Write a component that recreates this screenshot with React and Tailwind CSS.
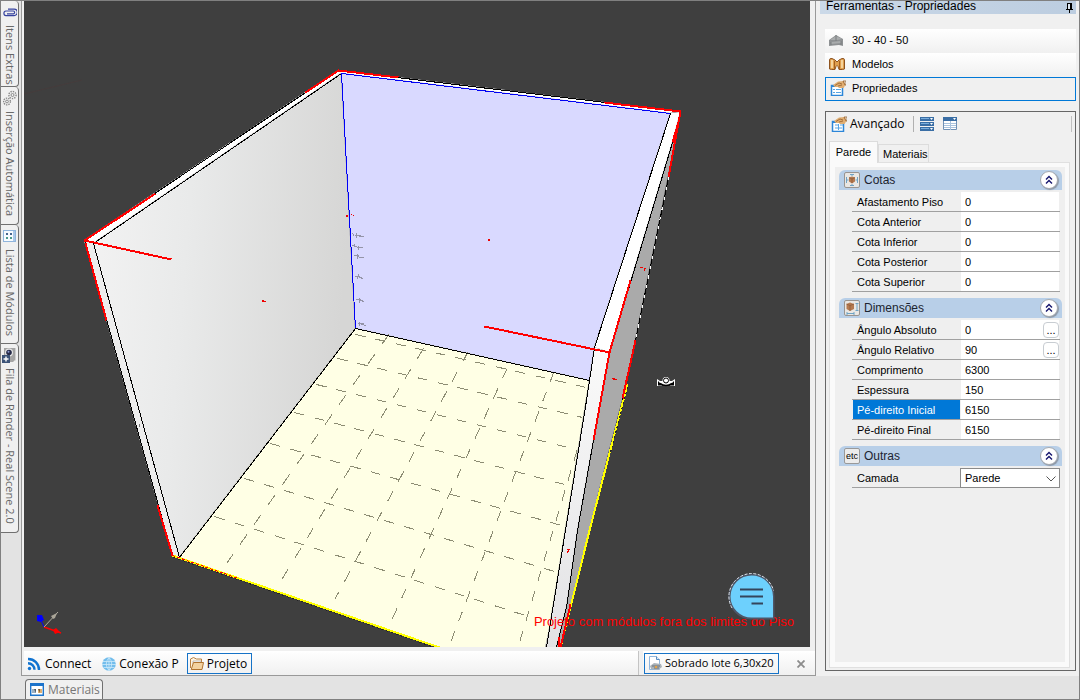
import React, { useState } from "react";

const SANS = "font-['Liberation_Sans',Arial,sans-serif]";
const UI = "font-['Open_Sans','Noto_Sans',sans-serif]";

/* ---------- icons ---------- */

const ClipIcon = () => (
  <svg width="14" height="9" viewBox="0 0 14 9" fill="none" stroke="#36439f" strokeWidth="1.2">
    <path d="M5 1.2h6.2a2.9 3 0 0 1 0 6.4H3a2 2.2 0 0 1 0-4.6h7.4a1.2 1.4 0 0 1 0 2.8H4" />
  </svg>
);

const GearsIcon = () => (
  <svg width="14" height="16" viewBox="0 0 14 16" fill="none" stroke="#8a8a8a">
    <circle cx="9.500" cy="5" r="3.600" strokeDasharray="1.4 1" strokeWidth="1.400" />
    <circle cx="9.500" cy="5" r="1.500" />
    <circle cx="4" cy="11.500" r="3.400" strokeDasharray="1.4 1" strokeWidth="1.400" />
    <circle cx="4" cy="11.500" r="1.400" />
  </svg>
);

const ModulesIcon = () => (
  <svg width="13" height="12" viewBox="0 0 13 12">
    <rect x=".5" y=".5" width="12" height="11" fill="#f7fbff" stroke="#8fb4dc" />
    <path d="M11 1v10" stroke="#a9c8ea" strokeWidth="2" />
    <path d="M3 3h2v2H3zM7 3h2v2H7z" fill="#46658f" />
    <path d="M3 7h2v2H3zM7 7h2v2H7z" fill="#4a9a8c" />
  </svg>
);

const RenderIcon = () => (
  <svg width="15" height="16" viewBox="0 0 15 16">
    <path d="M2 1h12v11l-3 3H5V9H2z" fill="#a4a4a4" />
    <path d="M13 1h1v12l-1 1z" fill="#d0d0d0" />
    <circle cx="7" cy="5.500" r="4" fill="#e6e6e6" />
    <circle cx="7" cy="5.500" r="2.800" fill="#252a48" />
    <circle cx="6.500" cy="4.800" r="1" fill="#8d9bd0" />
    <path d="M0 8h8v8H0z" fill="#3d5478" />
    <path d="M4 9.500v5M1.500 12h5" stroke="#fff" strokeWidth="1.400" />
  </svg>
);

const WallIcon = () => (
  <svg width="15" height="13" viewBox="0 0 15 13">
    <path d="M0 6 7 1l7 4v7l-4-1-5 .5L0 12z" fill="#8e9193" />
    <path d="M1 6 7 2l6 3-5 1zM2 8l10-1v2L2 10z" fill="#a9acad" />
    <path d="M7 1v6M2 8v3M12 7v4" stroke="#7b7e80" />
  </svg>
);

const BindersIcon = () => (
  <svg width="16" height="14" viewBox="0 0 16 14">
    <path d="M.5 3Q.5 1 3 1.500L6 3l2 2 2-2 3-1.500q2.500-.5 2.500 1.500v9l-2 .5H10l-1-3-1-1-1 1-1 3H2.500L.5 12z" fill="#e0a050" stroke="#8f5420" />
    <path d="M5.500 4v8M10.500 4v8" stroke="#a7611e" />
    <path d="M3 3v8M13 3v8" stroke="#fbe3b4" strokeWidth="1.500" />
  </svg>
);

const PropsIcon = ({ grid }) => (
  <svg className="shrink-0" width="16" height="16" viewBox="0 0 16 16">
    <path d="M1.500 5.500h11v10h-11z" fill="#fff" stroke="#2c86d8" strokeWidth="1.500" />
    <path d="M1 5h6v2H1z" fill="#2c86d8" />
    {grid ? (
      <path d="M4 9h3M9 9h3M4 12h7M7.500 8v6" stroke="#57a5e5" />
    ) : (
      <path d="M3 9.500h2M6 9.500h5M3 12.500h2M6 12.500h5" stroke="#57a5e5" />
    )}
    <path d="M3 5 8 1.500 14 1l1.500 4-2 3H9L8 7 5 7z" fill="#e0ae72" />
    <path d="M5 5.500 9 3l3 1M8 6l4-1M13 1h3v4h-1z" stroke="#94602d" fill="none" strokeWidth=".8" />
  </svg>
);

const RowsIcon = () => (
  <svg width="15" height="14" viewBox="0 0 15 14">
    {[0, 5, 10].map((y) => (
      <g key={y}>
        <path d={`M0 ${y}h14v4H0z`} fill="#3a6ea5" />
        <path d={`M1 ${y + 1}h8v1H1z`} fill="#7aaedd" />
        <path d={`M10 ${y + 1}h3l-1.500 2z`} fill="#fff" />
      </g>
    ))}
  </svg>
);

const TableIcon = () => (
  <svg width="15" height="14" viewBox="0 0 15 14">
    <path d="M.5.500h13v12H.5z" fill="#fff" stroke="#6f90b5" />
    <path d="M0 0h14v4H0z" fill="#3a6ea5" />
    <path d="M10 1h3l-1.500 2z" fill="#fff" />
    <path d="M1 6.500h12M1 8.500h12M1 10.500h12M7.500 4v9" stroke="#a9c3de" />
  </svg>
);

const PinIcon = () => (
  <svg width="8" height="10" viewBox="0 0 8 10" shapeRendering="crispEdges">
    <path d="M1 0h5v6H1z" fill="#000" />
    <path d="M2 1h2v5H2z" fill="#dfe8f2" />
    <path d="M0 6h7v1H0zM3 7h1v3H3z" fill="#000" />
  </svg>
);

const FeedIcon = () => (
  <svg className="shrink-0" width="14" height="14" viewBox="0 0 14 14" fill="none" stroke="#1173d0" strokeWidth="2.400">
    <circle cx="2.500" cy="11.500" r="1.700" fill="#1173d0" stroke="none" />
    <path d="M1 6.200a6.500 6.500 0 0 1 6.500 6.500M1 2a10.700 10.700 0 0 1 11 11" />
  </svg>
);

const GlobeIcon = () => (
  <svg className="shrink-0" width="14" height="14" viewBox="0 0 14 14">
    <circle cx="7" cy="7" r="6.800" fill="#72bdec" />
    <path d="M1 4.500h12M0 7.500h14M1.500 10.500h11M7 0v14M7 .5Q1.500 7 7 13.500M7 .5Q12.500 7 7 13.500" stroke="#cdeafa" fill="none" strokeWidth=".8" />
  </svg>
);

const FolderIcon = () => (
  <svg className="shrink-0" width="14" height="13" viewBox="0 0 14 13">
    <path d="M.5 11V2l3-1.500 3 1.500h5v3" fill="#fff3df" stroke="#b98243" />
    <path d="M3 4h8v3H3z" fill="#fff" stroke="#999" strokeWidth=".6" />
    <path d="M3.500 5.500h10l-1.500 7H1.200z" fill="#f3d2a0" stroke="#b0732f" />
  </svg>
);

const DocIcon = () => (
  <svg className="shrink-0" width="14" height="15" viewBox="0 0 14 15">
    <path d="M1.500.5h7l3 3v10h-10z" fill="#fff" stroke="#8fb6dd" />
    <path d="M8.500.5v3h3" fill="#dbe9f7" stroke="#5b8ec2" />
    <path d="M2 10 6 7l7 1 1 3-4 3-7-1z" fill="#aab2b8" />
    <path d="M4 10h8M6 12h5" stroke="#69727a" />
    <circle cx="8" cy="11" r="1.300" fill="#dfa14b" />
  </svg>
);

const MaterialsIcon = () => (
  <svg className="shrink-0" width="14" height="13" viewBox="0 0 14 13">
    <path d="M.7.700h12.600v11.600H.7z" fill="#fff" stroke="#1c73cb" strokeWidth="1.400" />
    <path d="M0 0h14v3H0z" fill="#1c73cb" />
    <path d="M2 6h4v4H2z" fill="#9db0c2" />
    <path d="M4 6h2v4z" fill="#4f5963" />
    <path d="M8 6h4v4H8z" fill="#e0b071" />
    <path d="M8 6h2v4z" fill="#7d5a33" />
  </svg>
);

const GroupIcon = ({ kind }) => {
  if (kind === "etc")
    return (
      <span className={`${SANS} flex h-4 w-4 items-center justify-center rounded-xs border border-[#999] bg-[#ececec] text-[9px] leading-none text-black`}>
        etc
      </span>
    );
  return (
    <svg width="16" height="16" viewBox="0 0 16 16">
      <rect x=".5" y=".5" width="15" height="15" rx="1.500" fill="#e9e7e4" stroke="#999490" />
      {kind === "cotas" ? (
        <>
          <path d="M5 5.500 8 4.500l3 1v4l-3 2-3-2z" fill="#b57a50" />
          <path d="M5 5.500 8 7l3-1.500M8 7v4" stroke="#8a5735" fill="none" strokeWidth=".7" />
          <path d="M2.500 5v6M13.500 5v6M2.500 8h2M11.500 8h2M6 2.500h4M6 13.500h4M8 2.500v1.500M8 12v1.500" stroke="#6fa3c4" fill="none" />
        </>
      ) : (
        <>
          <path d="M2.500 4 6 2.500 10 4v5l-4 2-3.500-2z" fill="#b57a50" />
          <path d="M2.500 4 6 5.500 10 4M6 5.500V11" stroke="#8a5735" fill="none" strokeWidth=".7" />
          <path d="M11.500 3.500h3M13 3.500v7M11.500 10.500h3M3 13.500h7M3 12v3M10 12v3" stroke="#6fa3c4" fill="none" />
        </>
      )}
    </svg>
  );
};

/* ---------- 3D scene ---------- */

const COLUMNS = [
  [388.3, 334, 226, 563],
  [423, 348, 280.6, 580],
  [467.7, 351, 334.3, 599],
  [506.6, 368, 391, 620],
  [553.6, 371, 450.8, 640],
  [576.5, 450, 519, 642],
];
const ROWS = [
  [355, 334, 586, 387],
  [337, 358, 582, 417],
  [316, 384, 567, 447],
  [294, 412, 564, 484],
  [270, 443, 561, 525],
  [244, 478, 554, 571],
  [214, 516, 528, 616],
];

function GridLine({ line }) {
  const [x1, y1, x2, y2] = line;
  const k = Math.hypot(x2 - x1, y2 - y1) / Math.max(Math.abs(x2 - x1), Math.abs(y2 - y1));
  return <line x1={x1} y1={y1} x2={x2} y2={y2} strokeDasharray={`${10 * k} ${10 * k}`} />;
}

function Scene() {
  return (
    <svg className="block h-full w-full" viewBox="24 1 786 646" preserveAspectRatio="xMinYMin slice" fill="none" role="img" aria-label="Vista 3D">
      <defs>
        <linearGradient id="leftWall" x1="0" y1="0" x2="1" y2="0.15">
          <stop offset="0" stopColor="#f3f3f3" />
          <stop offset="0.4" stopColor="#e9eaea" />
          <stop offset="1" stopColor="#d6d6d5" />
        </linearGradient>
        <linearGradient id="column" x1="0" y1="0" x2="0" y2="1">
          <stop offset="0" stopColor="#fafafa" />
          <stop offset="1" stopColor="#e2e2e4" />
        </linearGradient>
      </defs>
      <rect x="24" y="1" width="786" height="646" fill="#3f3f3f" />
      <path d="M24 94 82 80" stroke="#463c3c" />
      <polygon points="84,240 338,70 680,111 670,113 341,73 93,243 179,557 172,555" fill="#fff" />
      <polygon points="84,240 93,243 179,557 172,555" fill="#ededed" />
      <polygon points="341,73 355,328 179,557 93,243" fill="url(#leftWall)" />
      <polygon points="341,73 670,113 594,347 589,380 355,328" fill="#d9d9ff" />
      <polygon points="355,328 589,380 546,647 439,647 179,557" fill="#ffffe5" />
      <polygon points="680,112 667.700,177 635,340 622,400 609,450 589,530 560,647 545,647 609,352" fill="#aaa" />
      <polygon points="670,113 680,112 672,142 609,352 594,347" fill="#fff" />
      <polygon points="594,347 609,352 593,440 577,530 566,607 556,647 546,647 586,400" fill="url(#column)" />

      <g shapeRendering="crispEdges" transform="translate(0.5 0.5)">
        <g stroke="#8c8c73">
          {COLUMNS.map((l) => <GridLine key={l.join()} line={l} />)}
        </g>
        <g stroke="#8c8c73">
          {ROWS.map((l) => <GridLine key={l.join()} line={l} />)}
        </g>
        <g stroke="#000">
          <path d="M84 240 338 70 680 111" />
          <path d="M341 73 93 243 179 557 355 328 589 380" />
          <path d="M84 240 172 555" />
          <path d="M670 113 594 347 586 400 546 647" />
          <path d="M672 142 609 352 593 440 577 530 566 607 556 647" />
          <path d="M668 177 635 340 622 400" />
        </g>
        <path d="M668 177 635 340" stroke="#fff" strokeDasharray="3 7" />
        <path d="M670 113 341 73 355 328" stroke="#0000f5" />
        <path d="M172 555 439 647M627 384 610 449 589 530 560 647" stroke="#ff0" strokeWidth="2" />
        <path d="M173 557 440 649M627 387 610 452" stroke="#222" strokeDasharray="2 3" />
        <g stroke="#f00" strokeWidth="2">
          <path d="M84 240 171 259M484 326 609 352" />
          <path d="M84 240 155 193M305 92 338 70 398 77M604 102 680 111" />
          <path d="M85 243 106 320M157 505 172 555" />
          <path d="M680 111 668 177M679 118 672 142" />
          <path d="M630 280 609 352 593 440" />
          <path d="M635 340 622 398" />
          <path d="M558 636V647M570 604 560 647" />
        </g>
        <path d="M172 555 238 578" stroke="#f00" strokeDasharray="3 2" />
        <g stroke="#9494a8">
          <path d="M352 233l2 3M354 235h6M356 232v5M358 236h5" />
          <path d="M352 245l5 1M354 243v3M356 247h6M358 245v4" />
          <path d="M353 255h5l1 3M357 253v5M358 257h5" />
          <path d="M354 276h5M358 274l-1 5M359 277l4 1" />
          <path d="M355 299h5M359 297v5M360 300l4 1" />
          <path d="M357 323h6M359 321v4M361 324l5 1" />
        </g>
        <g fill="#e00" stroke="none">
          <path d="M345 214h2v2h-2zM350 213h1v1h-1zM352 214h1v1h-1zM487 238h2v2h-2z" />
          <path d="M261 299h2v1h2v1h-4zM639 266h3v1h-3zM643 267h2v1h-1v2h-1zM611 377h3v1h2v1h-4z" />
          <path d="M566 548h3v1h-1v2h-1v1h-1v-2h1z" />
          <path d="M138 423h1v3h-1z" fill="#777" />
        </g>
      </g>

      <path d="M44 627 61 633" stroke="#f00" strokeWidth="1.500" />
      <path d="M53 630 56 628 60 632 55 634z" fill="#f00" />
      <path d="M44 627 39 616" stroke="#00f" />
      <path d="M37 615h5l2 5-3 2-4-1z" fill="#00f" />
      <path d="M44 627 58 612" stroke="#b0aca0" />
      <path d="M51 616l6-3-2 5-2 1z" fill="#aaa598" />

      <path d="M657 379v7h5v-1h8v1h5v-7l-3 2h-12z" fill="#fff" />
      <circle cx="666" cy="380.500" r="3.500" fill="#fff" />
      <circle cx="666" cy="380.500" r="2.500" fill="#fff" stroke="#000" />
      <path d="M660 383.500q6 4 12 0" stroke="#000" strokeWidth="1.600" />
      <path d="M658 381v4.500h4.500zM674 381v4.500h-4.500z" fill="#000" />
    </svg>
  );
}

/* ---------- panels ---------- */

const SIDE_TABS = [
  { label: "Itens Extras", icon: <ClipIcon />, size: "h-[86px]" },
  { label: "Inserção Automática", icon: <GearsIcon />, size: "h-[138px]" },
  { label: "Lista de Módulos", icon: <ModulesIcon />, size: "h-[119px]" },
  { label: "Fila de Render - Real Scene 2.0", icon: <RenderIcon />, size: "h-[189px]" },
];

function SideTabs() {
  return (
    <nav className="flex w-5 shrink-0 flex-col items-start bg-[#e3e3e3]">
      {SIDE_TABS.map((t) => (
        <button key={t.label} className={`${t.size} ${UI} flex w-[18px] flex-col items-center gap-1.5 rounded-r border-r border-b border-[#707070] bg-[#f0f0f0] pt-1 text-[11px] text-[#666]`}>
          <span className="flex h-3.5 w-4 shrink-0 items-center justify-center">{t.icon}</span>
          <span className="whitespace-nowrap leading-4 [writing-mode:vertical-rl]">{t.label}</span>
        </button>
      ))}
    </nav>
  );
}

function PropertyRow({ id, name, value, more, selected }) {
  return (
    <div className="flex h-5 border-b border-[#a0a0a0] pr-px">
      <label htmlFor={id} className={`ml-px w-[107px] shrink-0 pl-1 leading-[21px] ${selected ? "h-[19px] bg-[#0078d7] text-white" : "h-[19px]"}`}>
        {name}
      </label>
      <div className="ml-px flex min-w-0 flex-1 items-center bg-white">
        <input id={id} defaultValue={value} className="h-[19px] min-w-0 flex-1 bg-transparent pl-1 outline-none" />
        {more && (
          <button aria-label={`Editar ${name}`} className="flex h-4 w-4 shrink-0 items-center justify-center rounded border border-[#c8cdd2] bg-white leading-3">
            ...
          </button>
        )}
      </div>
    </div>
  );
}

function Group({ title, kind, children }) {
  return (
    <section className="flex flex-col gap-0.5">
      <div className="flex h-5 items-center rounded-t-md bg-[#b8cfe8] pr-1 pl-[5px]">
        <GroupIcon kind={kind} />
        <h3 className="ml-1 flex-1 text-xs text-[#1c2430]">{title}</h3>
        <button aria-label={`Recolher ${title}`} className="flex h-[18px] w-[18px] items-center justify-center rounded-full border border-[#a4a9b0] bg-white shadow-[1px_1px_1px_#8c97a6]">
          <svg width="8" height="10" viewBox="0 0 8 10" fill="none" stroke="#15156e" strokeWidth="1.400">
            <path d="M1 4.500 4 1.500l3 3M1 8.500 4 5.500l3 3" />
          </svg>
        </button>
      </div>
      <div className="mr-0.5 ml-[13px]">{children}</div>
    </section>
  );
}

const COTAS = ["Afastamento Piso", "Cota Anterior", "Cota Inferior", "Cota Posterior", "Cota Superior"];
const DIMENSOES = [
  { name: "Ângulo Absoluto", value: "0", more: true },
  { name: "Ângulo Relativo", value: "90", more: true },
  { name: "Comprimento", value: "6300" },
  { name: "Espessura", value: "150" },
  { name: "Pé-direito Inicial", value: "6150", selected: true },
  { name: "Pé-direito Final", value: "6150" },
];

function ToolsPanel() {
  const [tab, setTab] = useState("Parede");
  return (
    <aside className={`${SANS} flex w-[263px] shrink-0 flex-col bg-[#f0f0f0] pr-[3px] pl-1 text-[11px] text-black`}>
      <header className="flex h-[13px] items-center justify-between bg-linear-to-r from-[#cbd9e8] to-[#bccde0] pr-0.5 pl-1.5 text-xs leading-[11px]">
        <h2 className="pb-0.5">Ferramentas - Propriedades</h2>
        <button aria-label="Fixar painel"><PinIcon /></button>
      </header>
      <div className="mt-[15px] flex flex-col pl-[5px]">
        <button className="flex h-6 items-center gap-2 bg-linear-to-b from-white to-[#f0f0f0] pb-0.5 pl-1 text-left">
          <WallIcon />30 - 40 - 50
        </button>
        <button className="flex h-6 items-center gap-[7px] bg-linear-to-b from-white to-[#f0f0f0] pb-0.5 pl-1 text-left">
          <BindersIcon />Modelos
        </button>
        <button className="flex h-6 items-center gap-1.5 border border-[#0078d7] pb-0.5 pl-1 text-left">
          <PropsIcon />Propriedades
        </button>
      </div>

      <div className="mt-2.5 mb-[5px] ml-[5px] flex flex-1 flex-col border border-[#666] pr-[5px] pb-0.5 pl-[3px]">
        <div className="flex h-[27px] items-center pb-[3px]">
          <button className={`${UI} ml-0.5 flex items-center gap-[3px] text-xs`}>
            <PropsIcon grid />Avançado
          </button>
          <span className="ml-2 h-4 w-px bg-[#b0b0b0]" />
          <button aria-label="Agrupar" className="ml-1.5"><RowsIcon /></button>
          <button aria-label="Tabela" className="ml-2"><TableIcon /></button>
          <span className="-mr-0.5 ml-auto h-4 w-px bg-[#c0c0c0]" />
        </div>
        <div role="tablist" className="mt-0.5 flex items-end">
          {["Parede", "Materiais"].map((t) => (
            <button
              key={t}
              role="tab"
              aria-selected={tab === t}
              onClick={() => setTab(t)}
              className={`border border-b-0 border-[#dcdcdc] px-1 ${tab === t ? "relative -mb-px h-[22px] w-[49px] bg-[#fafafa] pb-px" : "h-[18px] w-[51px] bg-[#f0f0f0] pt-px"}`}
            >
              {t}
            </button>
          ))}
        </div>
        <div role="tabpanel" className="flex-1 border border-[#e0e0e0] bg-[#fafafa] pt-1 pr-1 pb-[5px] pl-[5px]">
          <div className="flex h-full flex-col gap-1.5 bg-[#efefef] pt-[3px] pr-[3px] pl-1">
            <Group title="Cotas" kind="cotas">
              {COTAS.map((n) => <PropertyRow key={n} id={n} name={n} value="0" />)}
            </Group>
            <Group title="Dimensões" kind="dim">
              {DIMENSOES.map((p) => <PropertyRow key={p.name} id={p.name} {...p} />)}
            </Group>
            <Group title="Outras" kind="etc">
              <div className="flex h-5 border-b border-[#a0a0a0]">
                <label htmlFor="camada" className="w-[108px] shrink-0 pl-[5px] leading-[21px]">Camada</label>
                <div className="relative min-w-0 flex-1">
                  <select id="camada" className="h-5 w-full appearance-none border border-[#8a8a8a] bg-white pl-1">
                    <option>Parede</option>
                  </select>
                  <svg className="pointer-events-none absolute top-2 right-1" width="10" height="6" viewBox="0 0 10 6" fill="none" stroke="#555">
                    <path d="M.5.500 5 5 9.500.5" />
                  </svg>
                </div>
              </div>
            </Group>
          </div>
        </div>
      </div>
    </aside>
  );
}

function Viewport() {
  return (
    <div className="relative min-h-0 flex-1 overflow-hidden bg-[#3f3f3f]">
      <Scene />
      <p className={`${SANS} absolute right-4 bottom-[17px] text-[13px] leading-4 whitespace-nowrap text-[#f00]`}>
        Projeto com módulos fora dos limites do Piso
      </p>
      <button aria-label="Mensagens" className="absolute right-[35px] bottom-[27px]">
        <svg width="47" height="47" viewBox="0 0 47 47">
          <path d="M23.500.5a23 23 0 1 0 0 46H46.500v-23a23 23 0 0 0-23-23z" fill="#4e5566" />
          <path d="M4 35A23 23 0 0 1 23.500.5a23 23 0 0 1 22 17" fill="none" stroke="#dfe6ec" strokeDasharray="3 1.500" />
          <path d="M23.500 2.500a21 21 0 1 0 0 42H45v-21a21 21 0 0 0-21.500-21z" fill="#6dd0fd" />
          <path d="M12 16.500h23M12 23.500h23M23.500 30.500H35" stroke="#34455c" strokeWidth="1.800" />
        </svg>
      </button>
    </div>
  );
}

function DocumentBar() {
  return (
    <div className={`${UI} mt-1 -mr-[5px] flex h-6 gap-1 text-xs text-black`}>
      <div className="flex flex-1 items-center border-r border-[#c4c4c4] bg-linear-to-b from-white to-[#f0f0f0] pt-px pl-[3px]">
        <button className="flex items-center gap-1"><FeedIcon />Connect</button>
        <button className="ml-[11px] flex items-center gap-[3px]"><GlobeIcon />Conexão P</button>
        <button className="ml-2 flex h-[21px] items-center gap-[3px] border border-[#1673c7] pr-1 pl-0.5"><FolderIcon />Projeto</button>
      </div>
      <div className="flex w-[172px] shrink-0 items-center bg-linear-to-b from-white to-[#f0f0f0] pt-px">
        <button className="ml-px flex h-[21px] w-[135px] items-center gap-[3px] border border-[#1673c7] pl-[3px] text-[11px] whitespace-nowrap">
          <DocIcon />Sobrado lote 6,30x20
        </button>
        <button aria-label="Fechar" className="ml-[18px]">
          <svg width="8" height="8" viewBox="0 0 8 8" stroke="#8c8c8c" strokeWidth="1.800"><path d="M.5.500l7 7M7.500.5l-7 7" /></svg>
        </button>
      </div>
    </div>
  );
}

export default function App() {
  return (
    <div className="flex h-screen flex-col overflow-hidden border border-[#808080] bg-[#e3e3e3]">
      <div className="flex min-h-0 flex-1">
        <SideTabs />
        <main className="flex min-w-0 flex-1 flex-col border-r border-b border-l border-[#999] bg-[#f0f0f0] pr-[5px] pl-0.5">
          <Viewport />
          <DocumentBar />
        </main>
        <ToolsPanel />
      </div>
      <footer className="flex h-[23px] shrink-0 items-end pl-6">
        <button className={`${UI} flex h-5 items-center gap-1 rounded-t border border-b-0 border-[#707070] bg-[#f0f0f0] pr-0.5 pl-1 text-xs text-[#777]`}>
          <MaterialsIcon />Materiais
        </button>
      </footer>
    </div>
  );
}
